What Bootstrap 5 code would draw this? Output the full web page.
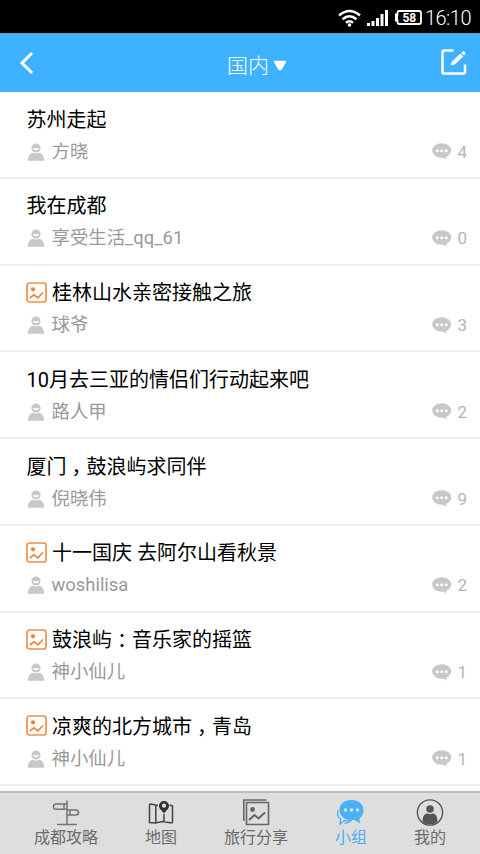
<!DOCTYPE html>
<html lang="zh-CN">
<head>
<meta charset="utf-8">
<meta name="viewport" content="width=device-width, initial-scale=1">
<title>国内</title>
<link href="https://cdn.jsdelivr.net/npm/bootstrap@5.3.0/dist/css/bootstrap.min.css" rel="stylesheet">
<style>
body{font-family:Roboto,"Noto Sans CJK SC",sans-serif;height:854px;overflow:hidden}
.status-bar{height:33px;background:#000;padding-right:9px;gap:6px}
.clock{font-size:20px;line-height:33px;font-weight:300;letter-spacing:-.5px;padding-top:3px;margin-left:-3px}
.status-bar svg{margin-top:2px}
.top-bar{height:59px;background:#3eb2ff;padding:0 13px 1px 19px;border-top:1px solid #4a9fd6}
.top-title{font-size:21px;line-height:30px;font-weight:300;padding-top:6px;gap:4px;margin-left:39px}
.edit-icon{margin-top:-1px}
.topic{height:86.75px;border-bottom:2px solid #eee;padding:12.500px 13px 0 26.500px}
.topic-title{font-size:20px;line-height:30px;height:30px;color:#000;gap:5px}
.topic-title svg{margin:-2px 0 0 -.5px}
.topic-meta{font-size:18.400px;line-height:28px;height:28px;margin-top:3px;color:#999}
.topic-meta .who{gap:7px}
.topic-meta .replies{font-size:17px;color:#b5b5b5;gap:5px}
.mid{font-feature-settings:"halt";padding:0 5px}
.tab-bar{height:63px;background:#dedede;border-top:2px solid #bbb;padding:6px 34px 0}
.tab-item{font-size:16px;line-height:22px;color:#6b6b6b}
.tab-item.current{color:#4aaef0}
</style>
<script src="https://cdn.jsdelivr.net/npm/bootstrap@5.3.0/dist/js/bootstrap.bundle.min.js"></script>
</head>
<body class="d-flex flex-column bg-white">
<svg class="d-none">
  <symbol id="person" viewBox="0 0 17 18"><circle cx="8.5" cy="5" r="4.6" fill="#c8c8c8"/><path d="M5.300 5.200h6.400c-.5 2.600-5.900 2.600-6.400 0z" fill="#fff"/><path d="M1 17.700c-.6 0-.8-.5-.7-1C.8 12.700 2.600 10.300 5 9.800q3.500 1.500 7 0c2.400.5 4.200 2.900 4.700 6.900.1.500-.1 1-.7 1z" fill="#c8c8c8"/></symbol>
  <symbol id="bubble" viewBox="0 0 20 17"><ellipse cx="9.700" cy="7.500" rx="9.500" ry="7.300" fill="#c8c8c8"/><path d="M10 14l4.500 2.500L14 12z" fill="#c8c8c8"/><g fill="#fff"><circle cx="5.200" cy="7.800" r="1.500"/><circle cx="9.700" cy="7.800" r="1.500"/><circle cx="14.200" cy="7.800" r="1.500"/></g></symbol>
  <symbol id="photo" viewBox="0 0 21 21"><rect x="1" y="1" width="19" height="19" rx="2.500" fill="none" stroke="#ee9048" stroke-width="1.700"/><circle cx="7" cy="7.300" r="2.100" fill="#ee8438"/><path d="M3.800 16l4.200-3.200 3.800 3L17 10.500" fill="none" stroke="#ee8438" stroke-width="1.700"/></symbol>
</svg>

<div class="status-bar d-flex align-items-center justify-content-end text-white flex-shrink-0">
  <svg width="23" height="18" viewBox="0 0 23 18" fill="none" stroke="#fff" stroke-width="2.500"><path d="M1 6.500q10.500-9 21 0M4.500 10.200q7-6 14 0M8 13.700q3.500-3 7 0"/><circle cx="11.500" cy="16" r="1.800" fill="#fff" stroke="none"/></svg>
  <svg width="22" height="17" viewBox="0 0 22 17" fill="#fff"><path d="M0 14h3v3H0zM4.500 12h3v5h-3zM9 9h3v8H9zM13.500 5h3v12h-3zM18 1h3v16h-3z"/></svg>
  <svg width="27" height="15" viewBox="0 0 27 15"><path d="M4 1h20q2 0 2 2v9q0 2-2 2H4q-1.500 0-1.500-2v-1.500H1v-6h1.500V3Q2.500 1 4 1z" fill="none" stroke="#fff" stroke-width="1.800"/><path d="M0 4h3v7H0z" fill="#fff"/><text x="14.300" y="11.800" text-anchor="middle" font-family="Roboto" font-weight="700" font-size="12" fill="#fff">58</text></svg>
  <span class="clock">16:10</span>
</div>

<header class="top-bar d-flex align-items-center justify-content-between text-white flex-shrink-0">
  <svg width="15" height="24" viewBox="0 0 15 24" fill="none" stroke="#fff" stroke-width="3" stroke-linecap="square"><path d="M12 3L3 12 12 21"/></svg>
  <div class="top-title d-flex align-items-center"><span>国内</span><svg width="14" height="12" viewBox="0 0 14 12"><path d="M1.500 1.500h11L8 9.500H6z" fill="#fff" stroke="#fff" stroke-width="1.500" stroke-linejoin="round"/></svg></div>
  <svg class="edit-icon" width="26" height="26" viewBox="0 0 26 26"><path d="M12.500 1.500H3q-1.500 0-1.500 1.500v20q0 1.500 1.500 1.500h19.500q1.500 0 1.500-1.500v-7.500" fill="none" stroke="#fff" stroke-width="2.500"/><path d="M11 12.500L19.500 4.500l2.800 2.900-8.500 8-4.300 1zM20.300 3.700l1.300-1.200c1.500-.8 3.500 1.200 2.700 2.800L23 6.600z" fill="#fff"/></svg>
</header>

<main class="flex-grow-1 overflow-hidden">
  <article class="topic"><div class="topic-title d-flex align-items-center"><span>苏州走起</span></div><div class="topic-meta d-flex justify-content-between"><span class="who d-flex align-items-center"><svg width="18" height="18"><use href="#person"/></svg>方晓</span><span class="replies d-flex align-items-center"><svg width="20" height="17"><use href="#bubble"/></svg>4</span></div></article>
  <article class="topic"><div class="topic-title d-flex align-items-center"><span>我在成都</span></div><div class="topic-meta d-flex justify-content-between"><span class="who d-flex align-items-center"><svg width="18" height="18"><use href="#person"/></svg>享受生活_qq_61</span><span class="replies d-flex align-items-center"><svg width="20" height="17"><use href="#bubble"/></svg>0</span></div></article>
  <article class="topic"><div class="topic-title d-flex align-items-center"><svg width="21" height="21"><use href="#photo"/></svg><span>桂林山水亲密接触之旅</span></div><div class="topic-meta d-flex justify-content-between"><span class="who d-flex align-items-center"><svg width="18" height="18"><use href="#person"/></svg>球爷</span><span class="replies d-flex align-items-center"><svg width="20" height="17"><use href="#bubble"/></svg>3</span></div></article>
  <article class="topic"><div class="topic-title d-flex align-items-center"><span>10月去三亚的情侣们行动起来吧</span></div><div class="topic-meta d-flex justify-content-between"><span class="who d-flex align-items-center"><svg width="18" height="18"><use href="#person"/></svg>路人甲</span><span class="replies d-flex align-items-center"><svg width="20" height="17"><use href="#bubble"/></svg>2</span></div></article>
  <article class="topic"><div class="topic-title d-flex align-items-center"><span>厦门<span class="mid">，</span>鼓浪屿求同伴</span></div><div class="topic-meta d-flex justify-content-between"><span class="who d-flex align-items-center"><svg width="18" height="18"><use href="#person"/></svg>倪晓伟</span><span class="replies d-flex align-items-center"><svg width="20" height="17"><use href="#bubble"/></svg>9</span></div></article>
  <article class="topic"><div class="topic-title d-flex align-items-center"><svg width="21" height="21"><use href="#photo"/></svg><span>十一国庆 去阿尔山看秋景</span></div><div class="topic-meta d-flex justify-content-between"><span class="who d-flex align-items-center"><svg width="18" height="18"><use href="#person"/></svg>woshilisa</span><span class="replies d-flex align-items-center"><svg width="20" height="17"><use href="#bubble"/></svg>2</span></div></article>
  <article class="topic"><div class="topic-title d-flex align-items-center"><svg width="21" height="21"><use href="#photo"/></svg><span>鼓浪屿<span class="mid">：</span>音乐家的摇篮</span></div><div class="topic-meta d-flex justify-content-between"><span class="who d-flex align-items-center"><svg width="18" height="18"><use href="#person"/></svg>神小仙儿</span><span class="replies d-flex align-items-center"><svg width="20" height="17"><use href="#bubble"/></svg>1</span></div></article>
  <article class="topic"><div class="topic-title d-flex align-items-center"><svg width="21" height="21"><use href="#photo"/></svg><span>凉爽的北方城市<span class="mid">，</span>青岛</span></div><div class="topic-meta d-flex justify-content-between"><span class="who d-flex align-items-center"><svg width="18" height="18"><use href="#person"/></svg>神小仙儿</span><span class="replies d-flex align-items-center"><svg width="20" height="17"><use href="#bubble"/></svg>1</span></div></article>
</main>

<nav class="tab-bar d-flex justify-content-between flex-shrink-0">
  <div class="tab-item d-flex flex-column align-items-center"><svg width="28" height="28" viewBox="0 0 28 28" fill="none" stroke="#737373" stroke-width="1.500"><path d="M15 1.500v24M5 25.500h20M15 5H4Q1.500 5 1.500 7.700T4 10.300h11M12 5v5.300M15 11h9q2.500 0 2.500 2.500T24 16h-9M18 11v5"/></svg>成都攻略</div>
  <div class="tab-item d-flex flex-column align-items-center"><svg width="28" height="28" viewBox="0 0 28 28" fill="none" stroke="#444" stroke-width="1.500"><path d="M11 6.500L3.500 5q-1 0-1 1v17.500l6 .5 7-1.500 9 1.500q1 0 1-1V7l-3-1M8.800 6v17.500M17 15v8"/><path d="M17 14.500c-2-3-5-4.500-5-7.500a5 5 0 0 1 10 0c0 3-3 4.500-5 7.500z" fill="#333" stroke="none"/><circle cx="17" cy="6.700" r="2.100" fill="#dedede" stroke="none"/></svg>地图</div>
  <div class="tab-item d-flex flex-column align-items-center"><svg width="28" height="28" viewBox="0 0 28 28" fill="none" stroke="#666" stroke-width="1.600"><path d="M1.800 22V1H24.500"/><path d="M4.500 3.500h22v22h-22z"/><circle cx="10.500" cy="10.500" r="2.400" fill="#666" stroke="none"/><path d="M7 21l5.500-5 4 3.500 6.500-6" stroke-width="2"/></svg>旅行分享</div>
  <div class="tab-item current d-flex flex-column align-items-center"><svg width="28" height="28" viewBox="0 0 28 28"><path d="M14.500 1C22 1 26.500 5.500 26.500 11c0 4-2 7-4 8 0 2 0 3 .7 5.500L17 20.800C8 22 2.500 17 2.500 11S7 1 14.500 1z" fill="#4ab1f7"/><path d="M1.500 11C-.2 15 1 18.500 3.700 20L3 25l4.800-3.700q4 1 6.700.2-3.500 3-7 2.500" fill="none" stroke="#4ab1f7" stroke-width="1.300"/><g fill="#dedede"><circle cx="8.500" cy="11" r="1.800"/><circle cx="14.500" cy="11" r="1.800"/><circle cx="20.500" cy="11" r="1.800"/></g></svg>小组</div>
  <div class="tab-item d-flex flex-column align-items-center"><svg width="28" height="28" viewBox="0 0 28 28"><circle cx="14" cy="13.500" r="12.600" fill="none" stroke="#555" stroke-width="1.400"/><circle cx="14" cy="10" r="3.800" fill="#555"/><path d="M6.500 23c0-6 2-8.500 5-8.500q2.500 1 5 0c3 0 5 2.500 5 8.500q-7.500 5-15 0z" fill="#555"/></svg>我的</div>
</nav>
</body>
</html>
